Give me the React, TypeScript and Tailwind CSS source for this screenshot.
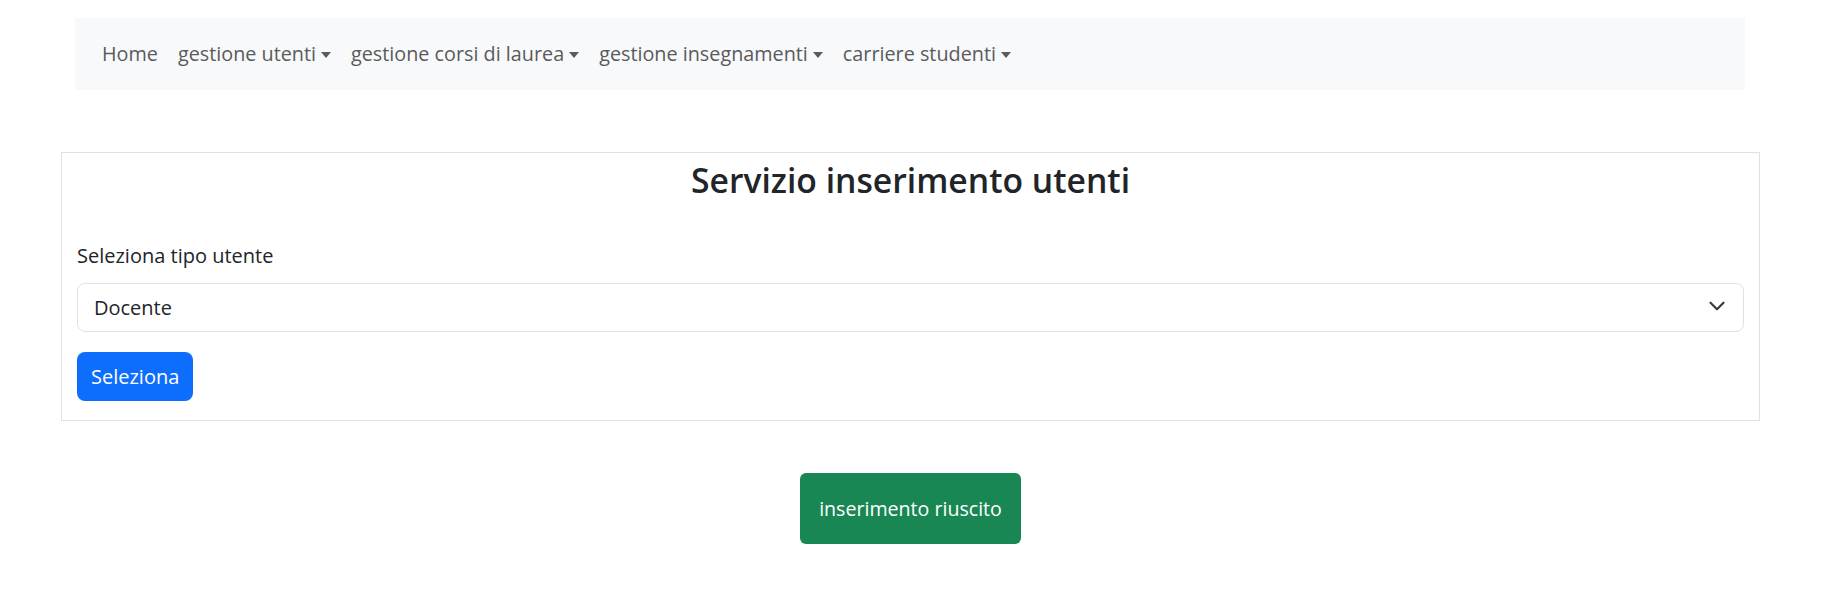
import { ChevronDown } from 'lucide-react';

const navItems: { label: string; dropdown: boolean }[] = [
  { label: 'Home', dropdown: false },
  { label: 'gestione utenti', dropdown: true },
  { label: 'gestione corsi di laurea', dropdown: true },
  { label: 'gestione insegnamenti', dropdown: true },
  { label: 'carriere studenti', dropdown: true }
];

function Caret() {
  return (
    <span className="ml-[5px] inline-block h-0 w-0 border-x-[5px] border-t-[6px] border-x-transparent border-t-[#5a5b5c] align-[3px]" />
  );
}

export default function App() {
  return (
    <div className="min-h-screen bg-white pb-[46px] pt-[18px] font-['Open_Sans',sans-serif] text-[#212529]">
      <nav className="ml-[75px] flex h-[72px] w-[1670px] items-center bg-[#f8f9fa] px-[17px]">
        {navItems.map((item) => (
          <a key={item.label} className="cursor-pointer whitespace-nowrap px-[10px] text-[19.8px] text-[#5a5b5c]">
            {item.label}
            {item.dropdown ? <Caret /> : null}
          </a>
        ))}
      </nav>

      <section className="ml-[61px] mt-[62px] w-[1699px] border border-[#dee2e6] px-[15px] pb-[19px]">
        <h2 className="pt-[3px] text-center text-[33.7px] font-semibold leading-[48px]">Servizio inserimento utenti</h2>

        <form className="mt-[38px]" onSubmit={(event) => event.preventDefault()}>
          <label htmlFor="tipo" className="block text-[20px] leading-[28px]">
            Seleziona tipo utente
          </label>
          <div className="relative mt-[13px]">
            <select
              id="tipo"
              defaultValue="Docente"
              className="h-[49px] w-full appearance-none rounded-[8px] border border-[#dee2e6] bg-white pl-[16px] pr-[48px] text-[20px] text-[#212529]"
            >
              <option>Docente</option>
              <option>Studente</option>
              <option>Segreteria</option>
            </select>
            <ChevronDown className="pointer-events-none absolute right-[14px] top-[10px] h-[26px] w-[26px] text-[#343a40]" strokeWidth={2} />
          </div>
          <button type="submit" className="mt-[20px] h-[49px] rounded-[8px] bg-[#0d6efd] px-[14px] text-[20px] text-white">
            Seleziona
          </button>
        </form>
      </section>

      <div className="mt-[52px] flex justify-center">
        <div className="ml-[-23px] flex h-[71px] w-[221px] items-center justify-center rounded-[6px] bg-[#198754] text-[19.6px] text-white">
          inserimento riuscito
        </div>
      </div>
    </div>
  );
}
